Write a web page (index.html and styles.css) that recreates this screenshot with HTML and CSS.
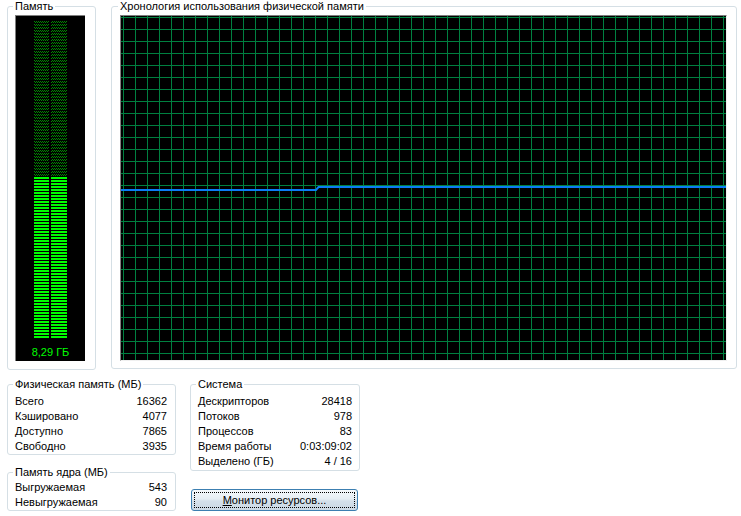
FILE: index.html
```html
<!DOCTYPE html>
<html lang="ru">
<head>
<meta charset="utf-8">
<title>Производительность — память</title>
<link rel="stylesheet" href="styles.css">
</head>
<body>
<div class="page">
  <div class="top">
    <fieldset class="box mem">
      <legend>Память</legend>
      <div class="gauge">
        <svg class="bars" width="69" height="318" viewBox="0 0 69 318">
          <defs>
            <pattern id="dim" patternUnits="userSpaceOnUse" width="2" height="3">
              <rect x="0" y="0" width="1" height="1" fill="#008a00"/>
              <rect x="1" y="1" width="1" height="1" fill="#008a00"/>
            </pattern>
            <pattern id="lit" patternUnits="userSpaceOnUse" width="69" height="3">
              <rect x="0" y="0" width="69" height="2" fill="#00ff00"/>
            </pattern>
          </defs>
          <!-- free part of the scale -->
          <rect x="18" y="0" width="15" height="156" fill="url(#dim)"/>
          <rect x="35" y="0" width="16" height="156" fill="url(#dim)"/>
          <!-- used part -->
          <rect x="18" y="156" width="15" height="162" fill="url(#lit)"/>
          <rect x="35" y="156" width="16" height="162" fill="url(#lit)"/>
        </svg>
        <div class="gauge-label">8,29 ГБ</div>
      </div>
    </fieldset>
    <fieldset class="box history">
      <legend>Хронология использования физической памяти</legend>
      <div class="chart">
        <svg width="605" height="344" viewBox="0 0 605 344">
          <polyline points="0,174 195,174 197.5,171 605,171" fill="none" stroke="#0a7cf5" stroke-width="2"/>
        </svg>
      </div>
    </fieldset>
  </div>

  <div class="bottom">
    <div class="col col-left">
      <fieldset class="box stats phys">
        <legend>Физическая память (МБ)</legend>
        <div class="row"><span>Всего</span><span>16362</span></div>
        <div class="row"><span>Кэшировано</span><span>4077</span></div>
        <div class="row"><span>Доступно</span><span>7865</span></div>
        <div class="row"><span>Свободно</span><span>3935</span></div>
      </fieldset>
      <fieldset class="box stats kernel">
        <legend>Память ядра (МБ)</legend>
        <div class="row"><span>Выгружаемая</span><span>543</span></div>
        <div class="row"><span>Невыгружаемая</span><span>90</span></div>
      </fieldset>
    </div>
    <div class="col col-right">
      <fieldset class="box stats sys">
        <legend>Система</legend>
        <div class="row"><span>Дескрипторов</span><span>28418</span></div>
        <div class="row"><span>Потоков</span><span>978</span></div>
        <div class="row"><span>Процессов</span><span>83</span></div>
        <div class="row"><span>Время работы</span><span>0:03:09:02</span></div>
        <div class="row"><span>Выделено (ГБ)</span><span>4 / 16</span></div>
      </fieldset>
      <button class="btn" type="button"><span class="focus"><u>М</u>онитор ресурсов...</span></button>
    </div>
  </div>
</div>
</body>
</html>
```

FILE: styles.css
```css
html, body {
  margin: 0;
  padding: 0;
  background: #ffffff;
}

body {
  font-family: "Liberation Sans", Arial, sans-serif;
  font-size: 11px;
  color: #000000;
}

.page {
  padding-left: 7px;
  width: 730px;
}

/* group boxes */
.box {
  margin: 0;
  border: 1px solid #d5dfe5;
  border-radius: 3px;
  min-inline-size: 0;
  box-sizing: border-box;
}

.box legend {
  padding: 0 2px;
  margin-left: -2px;
  line-height: 13px;
  font-size: 11px;
}

.top {
  display: flex;
  align-items: flex-start;
}

.mem {
  width: 89px;
  padding: 2px 10px 8px 7px;
}

.history {
  width: 626px;
  margin-left: 15px;
  padding: 2px 9px 7px 8px;
}

/* memory usage scale */
.gauge {
  width: 70px;
  height: 346px;
  box-sizing: border-box;
  background: #000000;
  border-top: 1px solid #7f7f7f;
  border-left: 1px solid #7f7f7f;
  padding-top: 5px;
  display: flex;
  flex-direction: column;
  align-items: center;
}

.bars {
  display: block;
  flex: none;
}

.gauge-label {
  margin-top: 6px;
  line-height: 14px;
  color: #00ff00;
  font-size: 11px;
}

/* history chart: black field with a 12px green grid */
.chart {
  width: 607px;
  height: 346px;
  box-sizing: border-box;
  background-color: #000000;
  background-image:
    linear-gradient(to right, #008040 1px, transparent 1px),
    linear-gradient(to bottom, #008040 1px, transparent 1px);
  background-size: 12px 12px;
  background-position: 14px 13px;
  border-top: 1px solid #7f7f7f;
  border-left: 1px solid #7f7f7f;
  border-right: 1px solid #f0f0f0;
  border-bottom: 1px solid #f0f0f0;
}

.chart svg {
  display: block;
}

/* lower panels */
.bottom {
  display: flex;
  align-items: flex-start;
  margin-top: 8px;
}

.col {
  display: flex;
  flex-direction: column;
  align-items: flex-start;
}

.col-left {
  width: 169px;
}

.col-right {
  width: 170px;
  margin-left: 14px;
}

.stats {
  width: 100%;
}

.phys {
  padding: 3px 8px 0 7px;
}

.kernel {
  margin-top: 11px;
  padding: 1px 8px 0 7px;
}

.sys {
  padding: 3px 7px 1px 7px;
}

.row {
  display: flex;
  justify-content: space-between;
  height: 15px;
  line-height: 15px;
  white-space: nowrap;
}

/* button */
.btn {
  margin: 18px 0 0 1px;
  width: 167px;
  height: 22px;
  padding: 2px;
  box-sizing: border-box;
  border: 1px solid #3c7fb1;
  border-radius: 3px;
  background: linear-gradient(#f4f8fb 0%, #e6eef4 45%, #d4e0ea 55%, #cbd8e4 100%);
  font-family: "Liberation Sans", Arial, sans-serif;
  font-size: 11px;
  color: #000000;
  display: flex;
}

.btn .focus {
  flex: 1;
  border: 1px dotted #000000;
  display: flex;
  align-items: center;
  justify-content: center;
  line-height: 14px;
}

.btn u {
  text-decoration: underline;
  text-underline-offset: 1px;
}
```
